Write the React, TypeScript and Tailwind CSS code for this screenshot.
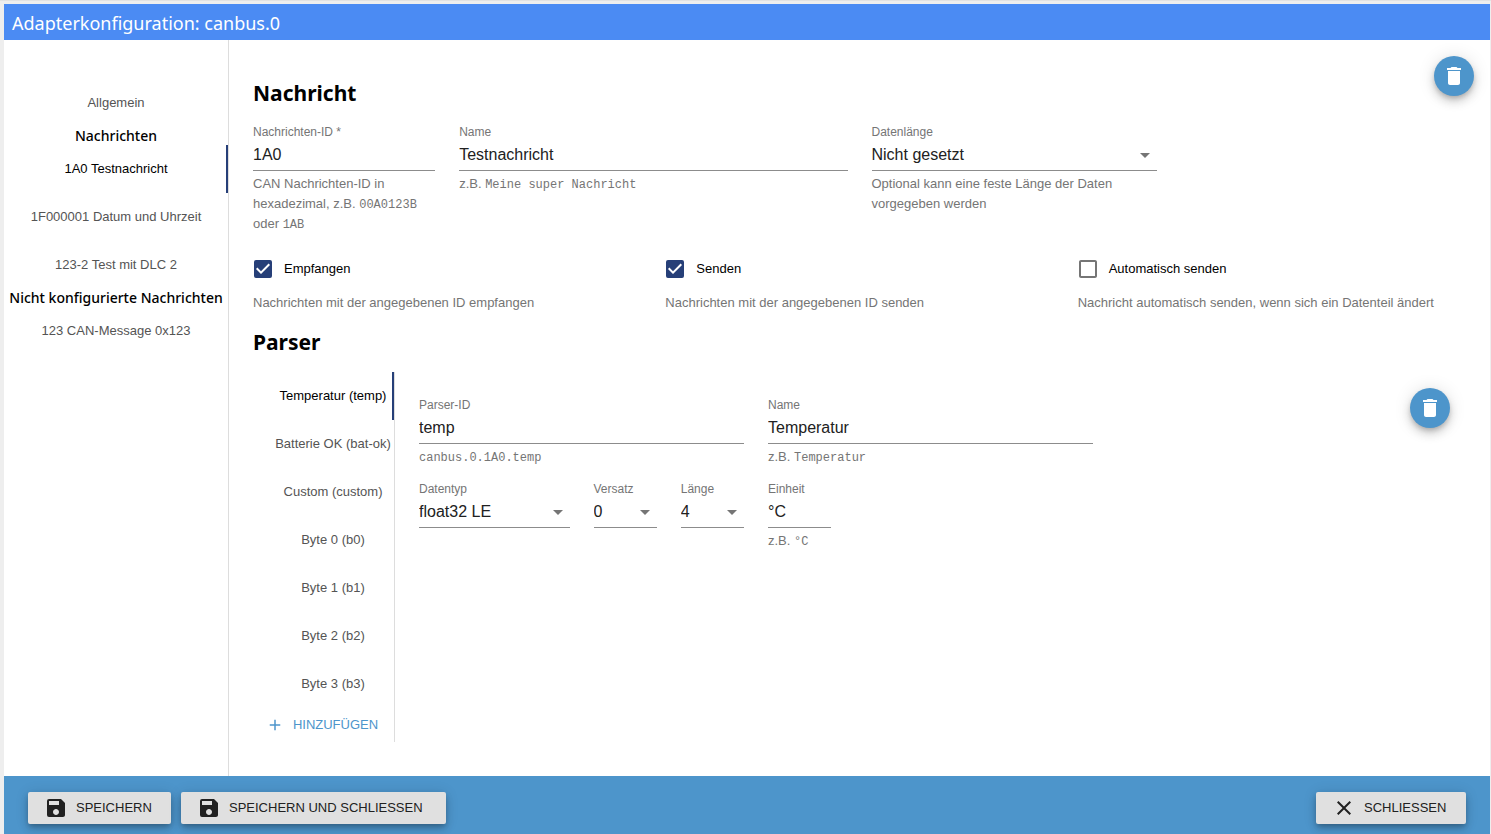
import { useId, useState, type ReactNode } from "react";
import { MdAdd, MdArrowDropDown, MdCheckBox, MdCheckBoxOutlineBlank, MdClose, MdDelete, MdSave } from "react-icons/md";

const PARSERS = [
  "Temperatur (temp)",
  "Batterie OK (bat-ok)",
  "Custom (custom)",
  "Byte 0 (b0)",
  "Byte 1 (b1)",
  "Byte 2 (b2)",
  "Byte 3 (b3)",
];

const LABEL = "block h-4 text-xs leading-4 text-[#757575]";
const CONTROL =
  "block h-[31px] w-full appearance-none rounded-none border-b border-[#8c8c8c] bg-transparent pb-px text-base text-[#212121] outline-none focus:border-[#263f78]";

function Helper({ children }: { children: ReactNode }) {
  return <p className="text-[13px] leading-5 text-[#757575]">{children}</p>;
}

function Code({ children }: { children: ReactNode }) {
  return <code className="font-['Liberation_Mono',monospace] text-xs">{children}</code>;
}

type FieldProps = {
  label: string;
  value: string;
  className: string;
  required?: boolean;
  helper?: ReactNode;
};

function TextField({ label, value, className, required, helper }: FieldProps) {
  const id = useId();
  return (
    <div className={className}>
      <label htmlFor={id} className={LABEL}>
        {label}
        {required && <span aria-hidden="true"> *</span>}
      </label>
      <input id={id} type="text" required={required} defaultValue={value} className={CONTROL} />
      {helper && <div className="pt-[3px]"><Helper>{helper}</Helper></div>}
    </div>
  );
}

function SelectField({ label, value, className, helper }: FieldProps) {
  const id = useId();
  return (
    <div className={className}>
      <label htmlFor={id} className={LABEL}>{label}</label>
      <div className="relative">
        <select id={id} defaultValue={value} className={CONTROL}>
          <option>{value}</option>
        </select>
        <MdArrowDropDown size={24} className="pointer-events-none absolute top-[3px] right-0 text-[#757575]" />
      </div>
      {helper && <div className="pt-[3px]"><Helper>{helper}</Helper></div>}
    </div>
  );
}

function CheckField({ label, helper, initial }: { label: string; helper: string; initial: boolean }) {
  const [checked, setChecked] = useState(initial);
  return (
    <div className="col-span-4">
      <label className="-ml-0.5 flex h-6 cursor-pointer items-center gap-[9px]">
        <span className="relative size-6">
          <input
            type="checkbox"
            checked={checked}
            onChange={(e) => setChecked(e.target.checked)}
            className="absolute inset-0 cursor-pointer opacity-0"
          />
          {checked ? (
            <MdCheckBox size={24} className="text-[#263f78]" />
          ) : (
            <MdCheckBoxOutlineBlank size={24} className="text-[#757575]" />
          )}
        </span>
        <span className="text-[13px] text-black">{label}</span>
      </label>
      <div className="pt-3"><Helper>{helper}</Helper></div>
    </div>
  );
}

function Tab({ label, active, onClick, className }: { label: string; active: boolean; onClick: () => void; className: string }) {
  return (
    <button
      type="button"
      role="tab"
      aria-selected={active}
      onClick={onClick}
      className={`flex h-12 items-center justify-center text-[13px] whitespace-nowrap ${active ? "text-black" : "text-[#545454]"} ${className}`}
    >
      {label}
    </button>
  );
}

function SidebarHeading({ children }: { children: ReactNode }) {
  return (
    <h3 className="text-center font-['Noto_Sans',sans-serif] text-sm leading-[18px] font-medium whitespace-nowrap text-black">
      {children}
    </h3>
  );
}

function SectionHeading({ children }: { children: ReactNode }) {
  return <h2 className="font-['Noto_Sans',sans-serif] text-[21px] leading-8 font-bold text-black">{children}</h2>;
}

function DeleteButton({ label }: { label: string }) {
  return (
    <button
      type="button"
      aria-label={label}
      className="absolute top-4 right-4 flex size-10 items-center justify-center rounded-full bg-[#4d95cb] text-white shadow-[0_3px_5px_-1px_rgba(0,0,0,0.2),0_6px_10px_0_rgba(0,0,0,0.14),0_1px_18px_0_rgba(0,0,0,0.12)]"
    >
      <MdDelete size={24} />
    </button>
  );
}

function FooterButton({ icon, label, className }: { icon: ReactNode; label: string; className: string }) {
  return (
    <button
      type="button"
      className={`flex h-8 items-center gap-2 rounded-xs bg-[#e0e0e0] pl-4 text-[13px] whitespace-nowrap text-[#212121] shadow-[0_3px_5px_-1px_rgba(0,0,0,0.2),0_5px_8px_0_rgba(0,0,0,0.14),0_1px_14px_0_rgba(0,0,0,0.12)] ${className}`}
    >
      {icon}
      {label}
    </button>
  );
}

export default function App() {
  const [message, setMessage] = useState("1A0 Testnachricht");
  const [parser, setParser] = useState(PARSERS[0]);

  const messageTab = (label: string) => (
    <Tab
      label={label}
      active={message === label}
      onClick={() => setMessage(label)}
      className={`w-full border-r-2 pl-0.5 ${message === label ? "border-[#263f78]" : "border-transparent"}`}
    />
  );

  return (
    <div className="flex h-screen flex-col overflow-hidden border-t border-[#e2e2e2] bg-[#eeeeee] pt-[3px] pr-px pl-1 font-['Liberation_Sans',Arial,sans-serif]">
      <header className="flex h-9 shrink-0 items-center bg-[#4b8bf3] px-2 pt-0.5">
        <h1 className="font-['Noto_Sans',sans-serif] text-lg text-white">Adapterkonfiguration: canbus.0</h1>
      </header>

      <div className="flex min-h-0 flex-1 bg-white">
        <nav role="tablist" className="w-[225px] shrink-0 border-r border-[#dddddd] pt-[39px]">
          {messageTab("Allgemein")}
          <SidebarHeading>Nachrichten</SidebarHeading>
          {messageTab("1A0 Testnachricht")}
          {messageTab("1F000001 Datum und Uhrzeit")}
          {messageTab("123-2 Test mit DLC 2")}
          <SidebarHeading>Nicht konfigurierte Nachrichten</SidebarHeading>
          {messageTab("123 CAN-Message 0x123")}
        </nav>

        <main className="relative min-w-0 flex-1 px-6 pt-[37px]">
          <DeleteButton label="Nachricht löschen" />

          <SectionHeading>Nachricht</SectionHeading>
          <div className="mt-[15px] grid grid-cols-12 gap-x-6">
            <TextField
              label="Nachrichten-ID"
              value="1A0"
              required
              className="col-span-2"
              helper={<>CAN Nachrichten-ID in hexadezimal, z.B. <Code>00A0123B</Code> oder <Code>1AB</Code></>}
            />
            <TextField
              label="Name"
              value="Testnachricht"
              className="col-span-4"
              helper={<>z.B. <Code>Meine super Nachricht</Code></>}
            />
            <SelectField
              label="Datenlänge"
              value="Nicht gesetzt"
              className="col-span-3"
              helper="Optional kann eine feste Länge der Daten vorgegeben werden"
            />
          </div>

          <div className="mt-[23px] grid grid-cols-12 gap-x-6">
            <CheckField label="Empfangen" helper="Nachrichten mit der angegebenen ID empfangen" initial />
            <CheckField label="Senden" helper="Nachrichten mit der angegebenen ID senden" initial />
            <CheckField
              label="Automatisch senden"
              helper="Nachricht automatisch senden, wenn sich ein Datenteil ändert"
              initial={false}
            />
          </div>

          <div className="mt-[13px]">
            <SectionHeading>Parser</SectionHeading>
          </div>
          <div className="mt-[14px] flex items-start">
            <div className="w-[142px] shrink-0 overflow-hidden border-r border-[#dddddd]">
              <div role="tablist">
                {PARSERS.map((name) => (
                  <div key={name} className="relative">
                    <Tab label={name} active={parser === name} onClick={() => setParser(name)} className="w-40" />
                    {parser === name && <span className="absolute inset-y-0 right-0 w-0.5 bg-[#263f78]" />}
                  </div>
                ))}
              </div>
              <button
                type="button"
                className="flex h-[34px] w-full items-center justify-center gap-[9px] pr-[3px] text-[13px] text-[#4d95cb]"
              >
                <MdAdd size={18} />
                HINZUFÜGEN
              </button>
            </div>

            <div className="relative min-w-0 flex-1 px-6 pt-[25px]">
              <DeleteButton label="Parser löschen" />
              <div className="grid grid-cols-12 gap-x-6 gap-y-[14px]">
                <TextField
                  label="Parser-ID"
                  value="temp"
                  className="col-span-4"
                  helper={<Code>canbus.0.1A0.temp</Code>}
                />
                <TextField
                  label="Name"
                  value="Temperatur"
                  className="col-span-4"
                  helper={<>z.B. <Code>Temperatur</Code></>}
                />
                <SelectField label="Datentyp" value="float32 LE" className="col-span-2 col-start-1" />
                <SelectField label="Versatz" value="0" className="col-span-1" />
                <SelectField label="Länge" value="4" className="col-span-1" />
                <TextField label="Einheit" value="°C" className="col-span-1" helper={<>z.B. <Code>°C</Code></>} />
              </div>
            </div>
          </div>
        </main>
      </div>

      <footer className="flex h-[58px] shrink-0 items-start gap-[10px] bg-[#4d95cb] px-6 pt-4">
        <FooterButton icon={<MdSave size={24} />} label="SPEICHERN" className="w-[143px]" />
        <FooterButton icon={<MdSave size={24} />} label="SPEICHERN UND SCHLIESSEN" className="w-[265px]" />
        <FooterButton icon={<MdClose size={24} />} label="SCHLIESSEN" className="ml-auto w-[150px]" />
      </footer>
    </div>
  );
}
